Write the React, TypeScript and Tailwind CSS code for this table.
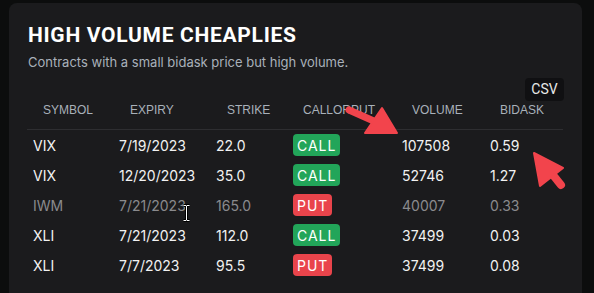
import React from "react";

type Row = { sym: string; exp: string; strike: string; type: "CALL" | "PUT"; vol: string; ba: string; dim?: boolean };

const rows: Row[] = [
  { sym: "VIX", exp: "7/19/2023", strike: "22.0", type: "CALL", vol: "107508", ba: "0.59" },
  { sym: "VIX", exp: "12/20/2023", strike: "35.0", type: "CALL", vol: "52746", ba: "1.27" },
  { sym: "IWM", exp: "7/21/2023", strike: "165.0", type: "PUT", vol: "40007", ba: "0.33", dim: true },
  { sym: "XLI", exp: "7/21/2023", strike: "112.0", type: "CALL", vol: "37499", ba: "0.03" },
  { sym: "XLI", exp: "7/7/2023", strike: "95.5", type: "PUT", vol: "37499", ba: "0.08" },
];

export default function App() {
  return (
    <div className="relative w-[594px] h-[293px] overflow-hidden bg-[#0c0d0d] pl-[9px] pt-[3px]" style={{ fontFamily: "Roboto, 'Noto Sans', sans-serif" }}>
      <div className="w-[573px] h-[300px] rounded-[8px] bg-[#1b1b1d] px-[18px] pt-[17px]">
        <h1 className="text-[21px] leading-[31px] font-bold tracking-[0.7px] text-white pl-[1px]" style={{ fontFamily: "Roboto, sans-serif" }}>HIGH VOLUME CHEAPLIES</h1>
        <p className="mt-[2px] text-[13px] leading-[18px] text-[#a9b1ba] pl-[1px]" style={{ fontFamily: "Inter, sans-serif" }}>Contracts with a small bidask price but high volume.</p>
        <div className="flex justify-end mt-[7px]">
          <div className="h-[23px] w-[39px] rounded-[4px] bg-[#101012] flex items-center justify-center text-[14px] text-[#e8e8e8]">CSV</div>
        </div>
        <div className="w-[536px]">
          <div className="flex h-[29px] items-start pt-[2px] text-[12px] leading-[14px] text-[#a9b1ba] border-b border-[#2e2e31]" style={{ fontFamily: "'Liberation Sans', Arial, sans-serif" }}>
            <div className="w-[86px] pl-[16px]">SYMBOL</div>
            <div className="w-[97px] pl-[17px]">EXPIRY</div>
            <div className="w-[77px] pl-[17px]">STRIKE</div>
            <div className="w-[109px] pl-[16px]">CALLORPUT</div>
            <div className="w-[88px] pl-[16px]">VOLUME</div>
            <div className="w-[79px] pl-[16px]">BIDASK</div>
          </div>
          {rows.map((r, i) => (
            <div key={i} className={`flex h-[30px] items-center text-[14px] ${r.dim ? "text-[#8a8a8d]" : "text-[#f2f2f2]"}`} style={{ fontFamily: "Inter, sans-serif" }}>
              <div className="w-[86px] pl-[6px]">{r.sym}</div>
              <div className="w-[97px] pl-[6px]">{r.exp}</div>
              <div className="w-[77px] pl-[6px]">{r.strike}</div>
              <div className="w-[109px] pl-[6px]">
                <span className={`inline-flex h-[22px] items-center rounded-[4px] px-[4px] text-[14px] tracking-[1px] text-white ${r.type === "CALL" ? "bg-[#22a559]" : "bg-[#e9444b]"}`}>{r.type}</span>
              </div>
              <div className="w-[88px] pl-[6px]">{r.vol}</div>
              <div className="w-[79px] pl-[6px]">{r.ba}</div>
            </div>
          ))}
        </div>
      </div>
      <svg className="absolute left-0 top-0 pointer-events-none" width="594" height="293" viewBox="0 0 594 293">
        <g fill="#f2444c" stroke="#f2444c" strokeLinejoin="round">
          <line x1="349" y1="110" x2="376" y2="122" strokeWidth="7" strokeLinecap="round" />
          <polygon points="382,108 397,133 365,133" strokeWidth="2" />
          <line x1="561" y1="185" x2="549" y2="170" strokeWidth="8" strokeLinecap="round" />
          <polygon points="534,153 563,168 540,186" strokeWidth="2" />
        </g>
        <g stroke="#000" strokeWidth="3" fill="none">
          <path d="M183.5 205.5h2.5l0.5 1 0.5-1h2.5M186.5 206v14M183.5 220.5h2.5l0.5-1 0.5 1h2.5" />
        </g>
        <g stroke="#fff" strokeWidth="1" fill="none">
          <path d="M183.5 205.5h2.5l0.5 1 0.5-1h2.5M186.5 206v14M183.5 220.5h2.5l0.5-1 0.5 1h2.5" />
        </g>
      </svg>
    </div>
  );
}
